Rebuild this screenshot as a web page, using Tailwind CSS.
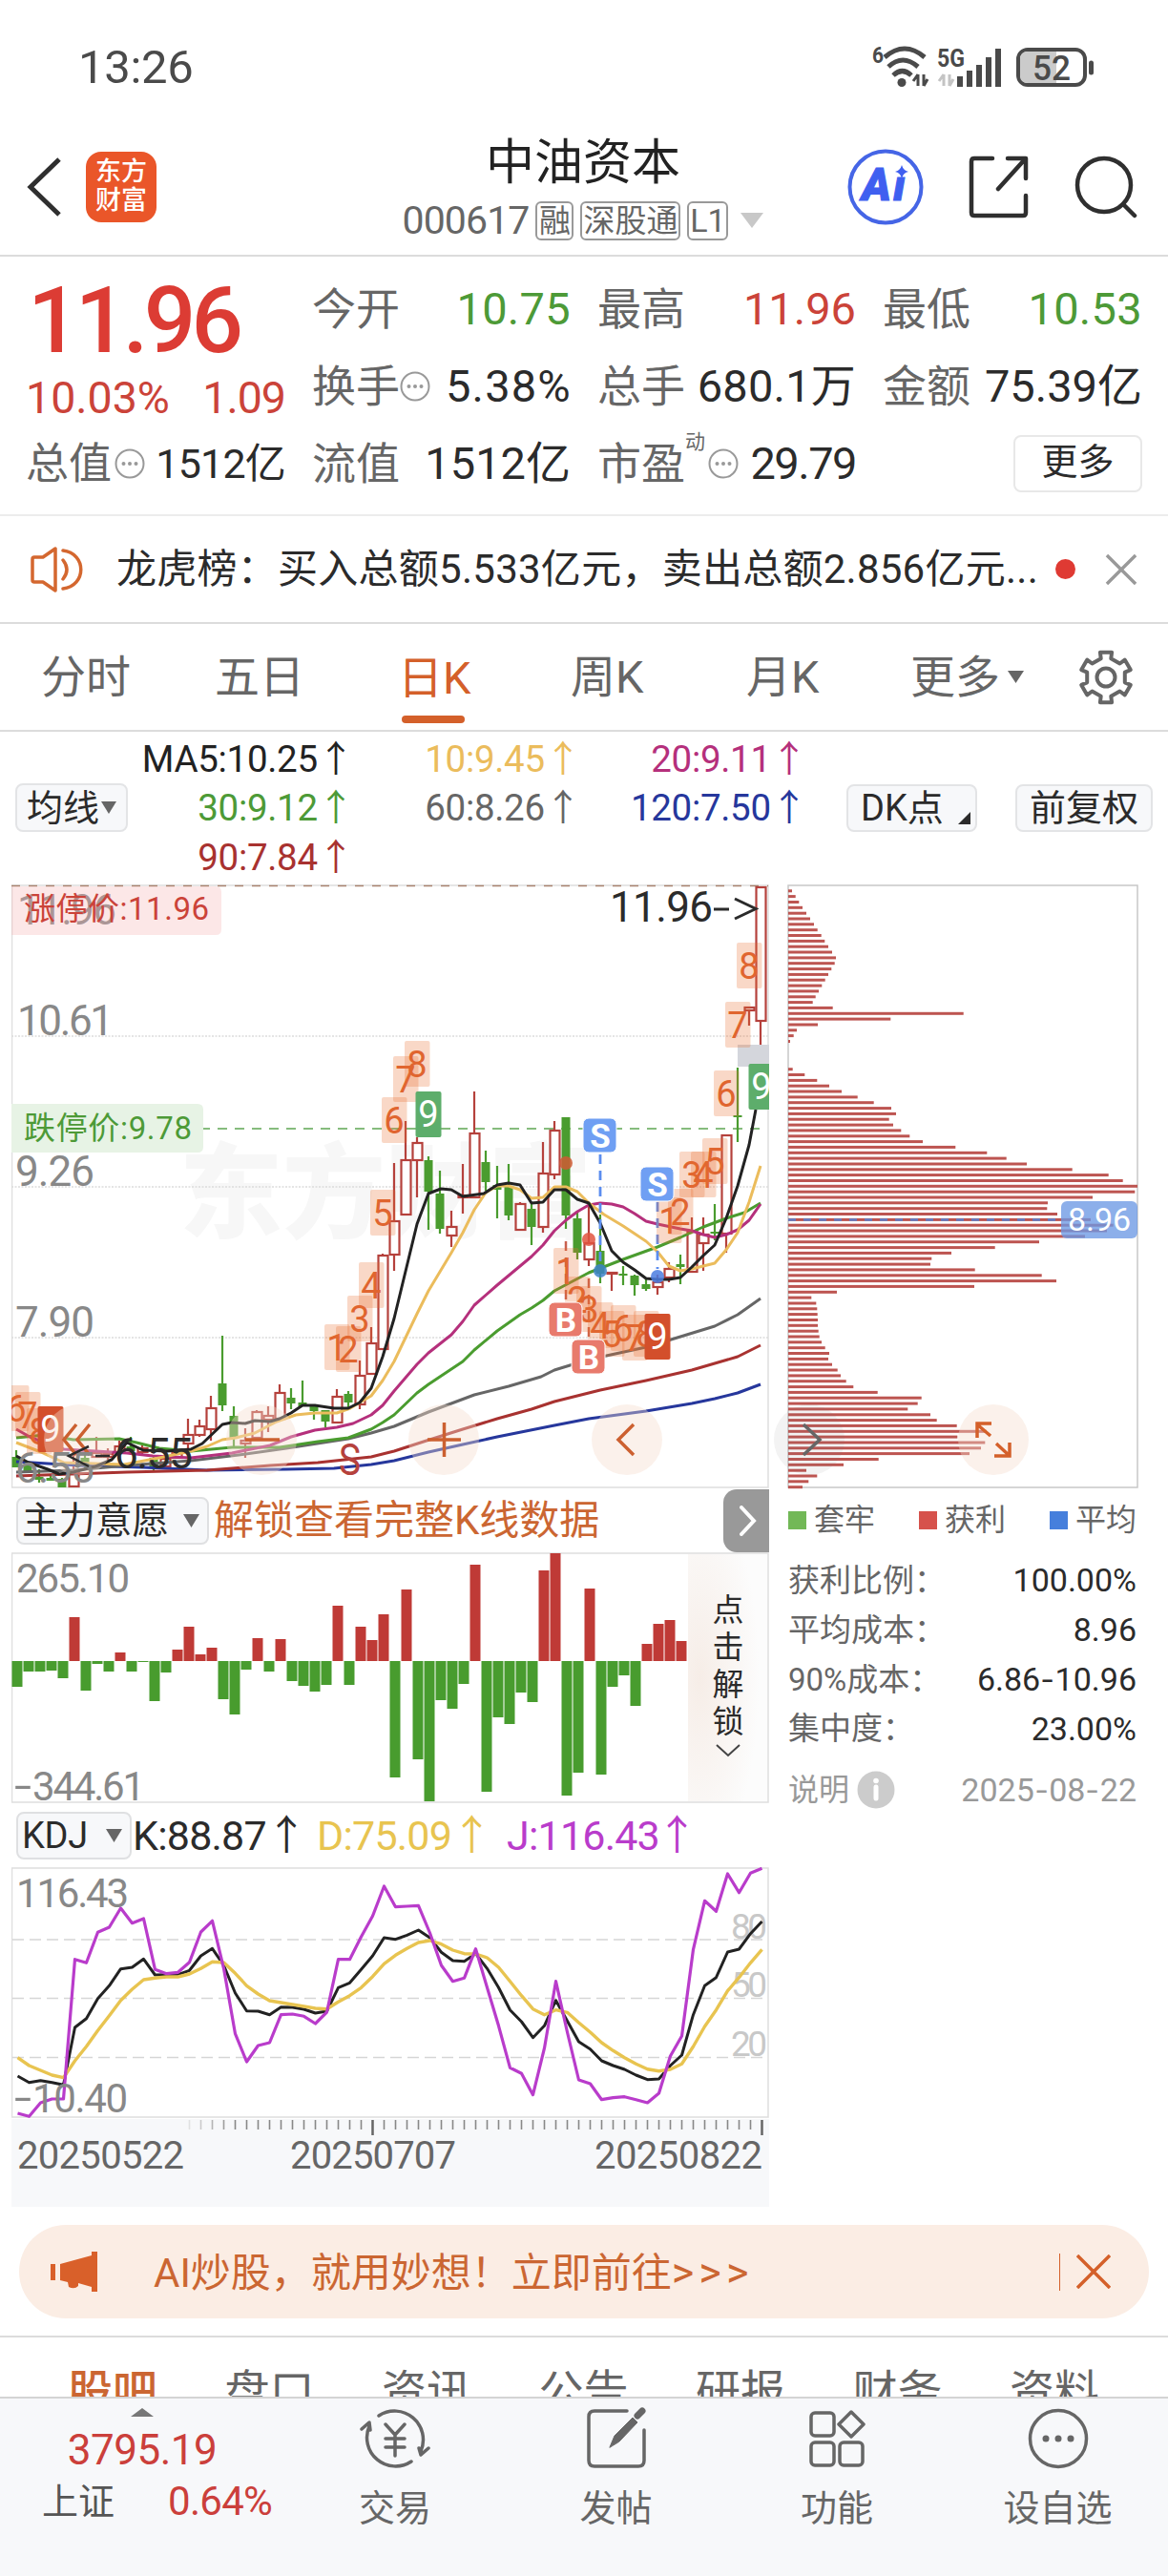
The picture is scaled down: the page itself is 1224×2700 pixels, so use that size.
<!DOCTYPE html>
<html lang="zh-CN">
<head>
    <meta charset="UTF-8">
    <meta name="viewport" content="width=device-width, initial-scale=1.0">
    <title>中油资本 000617</title>
    <script src="https://cdn.jsdelivr.net/npm/@tailwindcss/browser@4"></script>
</head>
<body class="bg-white">
<div class="w-[1224px] h-[2700px] overflow-hidden flex flex-col bg-white text-[#2b2b2b] font-['Roboto','Noto_Sans_CJK_SC',sans-serif] whitespace-nowrap">

    <!-- status bar -->
    <div class="h-[98px] shrink-0 flex items-center justify-between pl-[82px] pr-[77px] pt-[42px] text-[#4a4a4a]">
        <span class="text-[49px] leading-none tracking-[-0.3px]">13:26</span>
        <svg width="234" height="48" viewBox="913 46 234 48" font-family="Roboto">
            <text x="914" y="66" font-size="23" font-weight="700" fill="#4a4a4a" textLength="12" lengthAdjust="spacingAndGlyphs">6</text>
            <g fill="none" stroke="#4a4a4a" stroke-width="5">
                <path d="M927 60Q948 42 969 60"/>
                <path d="M931 70Q946 56 962 70"/>
                <path d="M936 79Q945.500 70 955 79"/>
            </g>
            <circle cx="945" cy="86.500" r="4.500" fill="#4a4a4a"/>
            <path d="M962 78v12M962 78l-5 7M968 90v-12M968 90l4-7" stroke="#4a4a4a" stroke-width="3" fill="none"/>
            <text x="982" y="70" font-size="25" font-weight="700" fill="#4a4a4a" textLength="29" lengthAdjust="spacingAndGlyphs">5G</text>
            <path d="M989 78v12M989 78l-5 7M995 90v-12M995 90l4-7" stroke="#c4c4c4" stroke-width="3" fill="none"/>
            <path d="M1006 91V80M1016 91V74M1026 91V68M1036 91V60M1046 91V51" stroke="#4a4a4a" stroke-width="6"/>
            <rect x="1067" y="52" width="70" height="37" rx="10" fill="#fff" stroke="#4a4a4a" stroke-width="4"/>
            <path d="M1077 54h30v33h-30q-8 0-8-8v-17q0-8 8-8z" fill="#cbcbcb"/>
            <path d="M1143.500 66v10" stroke="#4a4a4a" stroke-width="5" stroke-linecap="round"/>
            <text x="1082" y="84" font-size="37" font-weight="500" fill="#4a4a4a" textLength="40" lengthAdjust="spacingAndGlyphs">52</text>
        </svg>
    </div>

    <!-- title bar -->
    <div class="h-[171px] shrink-0 border-b-2 border-[#dcdcdc] flex pl-[28px] pr-[32px]">
        <div class="w-[380px] flex items-center gap-[26px] pt-[26px]">
            <svg width="36" height="62" viewBox="0 0 36 62" fill="none" stroke="#2f2f2f" stroke-width="5"><path d="M34 2L4 31l30 29"/></svg>
            <div class="size-[74px] rounded-[16px] bg-[#ea5629] text-white text-[27px] font-medium leading-[30px] flex flex-col items-center justify-center pb-0.5"><span>东方</span><span>财富</span></div>
        </div>
        <div class="w-[406px] flex flex-col items-center pt-[45px]">
            <div class="text-[51px] leading-[56px] text-[#222]">中油资本</div>
            <div class="flex items-center gap-[7px] mt-[11px] text-[#666]">
                <span class="text-[41px] leading-[42px] tracking-[-0.900px]">000617</span>
                <span class="h-[41px] w-[40px] flex items-center justify-center border-2 border-[#999] rounded-md text-[33px] leading-none">融</span>
                <span class="h-[41px] w-[105px] flex items-center justify-center border-2 border-[#999] rounded-md text-[33px] leading-none">深股通</span>
                <span class="h-[41px] w-[43px] flex items-center justify-center border-2 border-[#999] rounded-md text-[34px] leading-none">L1</span>
                <svg class="ml-[6px]" width="24" height="16" viewBox="0 0 24 16"><path d="M0 0h24L12 16z" fill="#c8c8c8"/></svg>
            </div>
        </div>
        <div class="flex-1 flex items-center justify-end gap-[46px] pt-[26px]">
            <svg width="80" height="80" viewBox="0 0 80 80" font-family="Roboto" font-weight="900" font-style="italic" fill="#3f5ff0">
                <circle cx="40" cy="40" r="37.500" fill="none" stroke="#4565e6" stroke-width="4"/>
                <text x="15" y="54" font-size="48" textLength="31" lengthAdjust="spacingAndGlyphs" stroke="#3f5ff0" stroke-width="1">A</text>
                <text x="48" y="54" font-size="46" stroke="#3f5ff0" stroke-width="1">ı</text>
                <path d="M57 17q1.500 5.500 7 7-5.500 1-7 7-1.500-6-7-7 5.500-1.500 7-7z"/>
            </svg>
            <svg width="66" height="66" viewBox="0 0 66 66" fill="none" stroke="#2f2f2f" stroke-width="4.500" stroke-linecap="round" stroke-linejoin="round"><path d="M26 3H7q-3 0-3 3v54q0 3 3 3h51q3 0 3-3V42M42 3h19v21M60 4L32 35"/></svg>
            <svg width="66" height="66" viewBox="0 0 66 66" fill="none" stroke="#2f2f2f" stroke-width="4.500" stroke-linecap="round"><circle cx="31" cy="31" r="28"/><path d="M51 51l12 12"/></svg>
        </div>
    </div>

    <!-- quote -->
    <div class="h-[272px] shrink-0 border-b-2 border-[#ececec] flex gap-[28px] pl-[28px] pr-[25px] pt-[14px] text-[47px] leading-none">
        <div class="w-[271px]">
            <div class="h-[105px] flex items-center text-[96px] font-medium text-[#dc3c34] tracking-[-4.700px] pl-px">11.96</div>
            <div class="h-[58px] flex items-center justify-between text-[#cb4339] text-[46.500px] -ml-px"><span>10.03%</span><span class="tracking-[-1px]">1.09</span></div>
            <div class="h-[80px] flex items-center -ml-px"><span class="text-[#666] text-[45px]">总值</span><svg class="ml-[3px]" width="32" height="32" viewBox="0 0 32 32"><use href="#dots"/></svg><span class="ml-auto text-[43px] tracking-[-0.8px]">1512亿</span></div>
        </div>
        <div class="w-[271px]">
            <div class="h-[81px] flex items-center"><span class="text-[#666] text-[46px]">今开</span><span class="ml-auto text-[#4d9a37] tracking-[0.3px]">10.75</span></div>
            <div class="h-[81px] flex items-center"><span class="text-[#666] text-[46px]">换手</span><svg width="32" height="32" viewBox="0 0 32 32"><use href="#dots"/></svg><span class="ml-auto -mr-px tracking-[1.200px]">5.38%</span></div>
            <div class="h-[81px] flex items-center"><span class="text-[#666] text-[46px]">流值</span><span class="ml-auto">1512亿</span></div>
        </div>
        <div class="w-[271px]">
            <div class="h-[81px] flex items-center"><span class="text-[#666] text-[46px]">最高</span><span class="ml-auto text-[#cb4339]">11.96</span></div>
            <div class="h-[81px] flex items-center"><span class="text-[#666] text-[46px]">总手</span><span class="ml-auto tracking-[0.2px]">680.1万</span></div>
            <div class="h-[81px] flex items-center"><span class="text-[#666] text-[46px]">市盈</span><span class="text-[21px] text-[#666] self-start mt-[8px]">动</span><svg class="ml-[3px]" width="32" height="32" viewBox="0 0 32 32"><use href="#dots"/></svg><span class="ml-auto tracking-[-1.500px]">29.79</span></div>
        </div>
        <div class="w-[272px]">
            <div class="h-[81px] flex items-center"><span class="text-[#666] text-[46px]">最低</span><span class="ml-auto text-[#4d9a37] tracking-[0.3px]">10.53</span></div>
            <div class="h-[81px] flex items-center"><span class="text-[#666] text-[46px]">金额</span><span class="ml-auto">75.39亿</span></div>
            <div class="h-[81px] flex items-center justify-end"><span class="w-[135px] h-[60px] border-2 border-[#e8e8e8] rounded-lg flex items-center justify-center text-[38px] pb-1">更多</span></div>
        </div>
    </div>

    <!-- notice -->
    <div class="h-[113px] shrink-0 border-b-2 border-[#dcdcdc] flex items-center pl-[32px] pr-[32px]">
        <svg width="56" height="48" viewBox="0 0 56 48" fill="none" stroke="#d4672f" stroke-width="3.500" stroke-linejoin="round" stroke-linecap="round"><path d="M2 13q0-2 2-2h9L26 2v44L13 37H4q-2 0-2-2zM34 14q8 10 0 20M34 4c25 3 25 37 0 40"/></svg>
        <span class="ml-[34px] w-[968px] text-[42px] leading-none tracking-[0.260px]">龙虎榜：买入总额5.533亿元，卖出总额2.856亿元...</span>
        <span class="ml-[16px] size-[21px] rounded-full bg-[#df3a33]"></span>
        <svg class="ml-auto" width="34" height="34" viewBox="0 0 35 35" stroke="#999" stroke-width="3.500"><path d="M2 2l31 31M33 2L2 33"/></svg>
    </div>

    <!-- period tabs -->
    <div class="h-[113px] shrink-0 border-b-2 border-[#dcdcdc] flex items-center pl-[43px] text-[47px] leading-none text-[#666]">
        <span class="w-[182px]">分时</span>
        <span class="w-[195px]">五日</span>
        <span class="w-[178px] h-full flex flex-col text-[#d4602a]"><span class="mt-[33px] -ml-[3px]">日K</span><span class="mt-[16px] ml-[1px] w-[66px] h-[8px] rounded-full bg-[#d4602a]"></span></span>
        <span class="w-[184px]">周K</span>
        <span class="w-[172px]">月K</span>
        <span class="w-[175px] flex items-center gap-[8px]">更多<svg width="17" height="13" viewBox="0 0 17 13"><path d="M0 0h17L8.500 13z" fill="#666"/></svg></span>
        <svg width="60" height="60" viewBox="-30 -30 60 60" fill="none" stroke="#666" stroke-width="4" stroke-linejoin="round"><circle r="9.500"/><path id="gear"/></svg>
    </div>

    <!-- moving averages -->
    <div class="h-[159px] shrink-0 flex items-center pl-[16px] pr-[16px]">
        <div class="w-[118px] h-[51px] rounded-lg border-2 border-[#e3e4e6] bg-[#f7f8fa] flex items-center justify-center gap-0.5 text-[38px] leading-none">均线<svg width="16" height="13" viewBox="0 0 16 13"><path d="M0 0h16L8 13z" fill="#666"/></svg></div>
        <div class="w-[712px] grid grid-cols-[237px_238px_237px] text-right text-[38.500px] leading-[51.500px] h-[154px] tracking-[-0.3px]">
            <span class="text-[#222]">MA5:10.25↑</span><span class="text-[#ebbc5c]">10:9.45↑</span><span class="text-[#b5307c]">20:9.11↑</span>
            <span class="text-[#4d9a37]">30:9.12↑</span><span class="text-[#666]">60:8.26↑</span><span class="text-[#26379c]">120:7.50↑</span>
            <span class="text-[#a83230]">90:7.84↑</span>
        </div>
        <div class="ml-auto w-[137px] h-[50px] rounded-lg border-2 border-[#e3e4e6] bg-[#f7f8fa] flex items-center text-[38px] leading-none pl-[13px]">DK点<svg class="self-end mb-[6px] ml-auto mr-[5px]" width="13" height="13" viewBox="0 0 13 13"><path d="M13 0v13H0z" fill="#2b2b2b"/></svg></div>
        <div class="ml-[40px] w-[144px] h-[50px] rounded-lg border-2 border-[#e3e4e6] bg-[#f7f8fa] flex items-center justify-center text-[38px] leading-none">前复权</div>
    </div>

    <!-- charts -->
    <div class="flex shrink-0 pl-[12px] h-[1387px]">
        <div class="w-[796px] flex flex-col">
            <svg id="kline" class="shrink-0" width="796" height="635" viewBox="12 926 796 635"></svg>
            <div class="h-[66px] flex items-center pl-[5px]">
                <div class="w-[202px] h-[50px] rounded-lg border-2 border-[#dfe0e2] bg-[#f7f8fa] flex items-center justify-between pl-[4px] pr-[8px] text-[38.500px] leading-none">主力意愿<svg width="17" height="14" viewBox="0 0 17 14"><path d="M0 0h17L8.500 14z" fill="#666"/></svg></div>
                <span class="ml-[5px] text-[42px] leading-none text-[#cb6632]">解锁查看完整K线数据</span>
                <span class="ml-auto mr-[2px] w-[48px] h-[66px] rounded-l-[14px] bg-[#999] flex items-center justify-center pl-1"><svg width="18" height="32" viewBox="0 0 18 32" fill="none" stroke="#fff" stroke-width="4" stroke-linecap="round"><path d="M2 2l13 14L2 30"/></svg></span>
            </div>
            <svg id="force" class="shrink-0" width="796" height="264" viewBox="12 1627 796 264"></svg>
            <div class="h-[66px] flex items-center pl-[5px] text-[43px] leading-none tracking-[-0.8px]">
                <div class="w-[121px] h-[50px] rounded-lg border-2 border-[#dfe0e2] bg-[#f7f8fa] flex items-center justify-between pl-[4px] pr-[8px] text-[38px] tracking-[-0.3px]">KDJ<svg width="17" height="14" viewBox="0 0 17 14"><path d="M0 0h17L8.500 14z" fill="#666"/></svg></div>
                <span class="ml-[1px] w-[193px]">K:88.87<i class="not-italic">↑</i></span>
                <span class="w-[199px] text-[#e8c450]">D:75.09<i class="not-italic">↑</i></span>
                <span class="text-[#b93ccb]">J:116.43<i class="not-italic -ml-[3px]">↑</i></span>
            </div>
            <svg id="kdj" class="shrink-0" width="796" height="356" viewBox="12 1957 796 356"></svg>
        </div>

        <!-- cost distribution -->
        <div class="w-[370px] ml-[16px] flex flex-col text-[33px] leading-none">
            <svg id="chips" class="shrink-0 -ml-[18px]" width="388" height="635" viewBox="806 926 388 635"></svg>
            <div class="h-[64px] w-[367px] flex items-center justify-between text-[32px] text-[#666] pl-[2px]">
                <span class="flex items-center gap-[8px]"><i class="size-[19px] bg-[#72b857]"></i>套牢</span>
                <span class="flex items-center gap-[8px]"><i class="size-[19px] bg-[#d6524c]"></i>获利</span>
                <span class="flex items-center gap-[8px]"><i class="size-[19px] bg-[#467fdc]"></i>平均</span>
            </div>
            <div class="w-[367px] pl-[2px] pt-[5px] text-[#666]">
                <div class="h-[52px] flex items-center justify-between"><span>获利比例：</span><span class="text-[34px] text-[#2b2b2b]">100.00%</span></div>
                <div class="h-[52px] flex items-center justify-between"><span>平均成本：</span><span class="text-[34px] text-[#2b2b2b]">8.96</span></div>
                <div class="h-[52px] flex items-center justify-between"><span>90%成本：</span><span class="text-[34px] text-[#2b2b2b]">6.86<i class="not-italic inline-block scale-x-125 mx-[3px]">-</i>10.96</span></div>
                <div class="h-[51px] flex items-center justify-between"><span>集中度：</span><span class="text-[34px] text-[#2b2b2b]">23.00%</span></div>
                <div class="h-[78px] flex items-center text-[#999]"><span class="text-[32px]">说明</span><svg class="ml-[8px]" width="40" height="40" viewBox="0 0 40 40"><circle cx="20" cy="20" r="19.500" fill="#ccc"/><path d="M20 17v12" stroke="#fff" stroke-width="5" stroke-linecap="round"/><circle cx="20" cy="10.500" r="2.800" fill="#fff"/></svg><span class="ml-auto text-[34px]">2025<i class="not-italic inline-block scale-x-125 mx-[3px]">-</i>08<i class="not-italic inline-block scale-x-125 mx-[3px]">-</i>22</span></div>
            </div>
        </div>
    </div>

    <!-- promo -->
    <div class="h-[98px] shrink-0 mx-[20px] mt-[19px] rounded-full bg-[#fbede4] flex items-center pl-[33px] pr-[40px] text-[#cb6632]">
        <svg width="50" height="42" viewBox="0 0 50 42" fill="#d9602a"><path d="M0 13h5v17H0zM10 13L43 4V0h6v42h-6v-5l-14-4v3q-4 4-10 1l-1-5-8-2z"/></svg>
        <span class="ml-[58px] text-[42px] leading-none">AI炒股，就用妙想！立即前往<span class="text-[45px] tracking-[5px]">&gt;&gt;&gt;</span></span>
        <span class="ml-auto w-px h-[39px] bg-[#d4602a]"></span>
        <svg class="ml-[17px]" width="36" height="36" viewBox="0 0 36 36" stroke="#d4602a" stroke-width="3.500"><path d="M1 1l34 34M35 1L1 35"/></svg>
    </div>

    <!-- info tabs -->
    <div class="mt-[18px] h-[64px] shrink-0 border-t-2 border-[#dcdcdc] overflow-hidden flex pl-[71px] pt-[32px] text-[47px] leading-[50px] text-[#666]">
        <span class="w-[164.500px] shrink-0 font-medium text-[#cb6632]">股吧</span><span class="w-[164.500px] shrink-0">盘口</span><span class="w-[164.500px] shrink-0">资讯</span><span class="w-[164.500px] shrink-0">公告</span><span class="w-[164.500px] shrink-0">研报</span><span class="w-[164.500px] shrink-0">财务</span><span class="w-[150px] shrink-0">资料</span>
    </div>

    <!-- bottom bar -->
    <div class="flex-1 bg-[#f7f8fa] border-t-2 border-[#d4d4d4] flex text-[38px] leading-none text-[#666]">
        <div class="w-[298px] flex flex-col items-center text-[#cb3f3b]">
            <svg class="mt-[10px]" width="24" height="9" viewBox="0 0 24 9"><path d="M12 0l12 9H0z" fill="#777"/></svg>
            <div class="mt-[13px] text-[44px] tracking-[-0.5px]">3795.19</div>
            <div class="mt-[11px] w-[242px] ml-[32px] flex items-center"><span class="text-[#555]">上证</span><span class="ml-[56px] text-[42px] tracking-[-0.7px]">0.64%</span></div>
        </div>
        <div class="w-[232px] flex flex-col items-center pt-[9px] gap-[21px]">
            <svg width="76" height="66" viewBox="-38 -33 76 66" fill="none" stroke="#666" stroke-width="3.500" stroke-linecap="round" stroke-linejoin="round"><path d="M-17-24A30 30 0 0 1 27 13M17 24A30 30 0 0 1-27-13M35 10l-8 7-2-7M-35-10l8-7 1 8M-10-15L0-4l10-11M0-4v22M-10 0H10M-10 9H10"/></svg>
            <span>交易</span>
        </div>
        <div class="w-[231px] flex flex-col items-center pt-[9px] gap-[21px]">
            <svg width="66" height="66" viewBox="0 0 66 66" fill="none" stroke="#666" stroke-width="3.500" stroke-linecap="round"><path d="M44 4H10q-6 0-6 6v46q0 6 6 6h46q6 0 6-6V24"/><path d="M26 42l5-12L50 11l5 5-19 20z" fill="#666" stroke-width="1"/><path d="M55 9l5-5" stroke-width="7"/></svg>
            <span>发帖</span>
        </div>
        <div class="w-[232px] flex flex-col items-center pt-[9px] gap-[21px]">
            <svg width="66" height="66" viewBox="0 0 66 66" fill="none" stroke="#666" stroke-width="3.500" stroke-linejoin="round"><rect x="6" y="6" width="24" height="24" rx="4"/><rect x="6" y="37" width="24" height="24" rx="4"/><rect x="36" y="37" width="24" height="24" rx="4"/><path d="M48 5l13 13-13 13-13-13z"/></svg>
            <span>功能</span>
        </div>
        <div class="flex-1 flex flex-col items-center pt-[9px] gap-[21px]">
            <svg width="66" height="66" viewBox="0 0 66 66"><circle cx="33" cy="33" r="29.500" fill="none" stroke="#666" stroke-width="3.500"/><g fill="#666"><circle cx="20" cy="33" r="3.500"/><circle cx="33" cy="33" r="3.500"/><circle cx="46" cy="33" r="3.500"/></g></svg>
            <span>设自选</span>
        </div>
    </div>
</div>

<svg width="0" height="0" class="absolute">
    <g id="dots"><circle cx="16" cy="16" r="14.500" fill="none" stroke="#999" stroke-width="2"/><g fill="#999"><circle cx="9.500" cy="16" r="2"/><circle cx="16" cy="16" r="2"/><circle cx="22.500" cy="16" r="2"/></g></g>
</svg>

<script>
    const RED = "#b5413c", GREEN = "#4a9c2f";
    const GREY = "#888";

    function text(x, y, size, fill, str, len, extra = "") {
        const fit = len ? ` textLength="${len}" lengthAdjust="spacing"` : "";
        return `<text x="${x}" y="${y}" font-size="${size}" fill="${fill}"${fit} ${extra}>${str}</text>`;
    }
    function line(points, color, w = 2.5) {
        return `<polyline points="${points}" fill="none" stroke="${color}" stroke-width="${w}" stroke-linejoin="round"/>`;
    }

    // gear outline, six teeth
    let gear = "";
    for (let k = 0; k < 6; k++) {
        [[-15, 20.5], [-13, 27], [13, 27], [15, 20.5]].forEach(([a, r]) => {
            const t = (k * 60 + a - 90) * Math.PI / 180;
            gear += (gear ? "L" : "M") + (Math.cos(t) * r).toFixed(1) + " " + (Math.sin(t) * r).toFixed(1);
        });
    }
    document.getElementById("gear").setAttribute("d", gear + "z");

    // candles: up flag, high, body top, body bottom, low
    const candles = [
        [0,1520,1527,1538,1538],[0,1535,1536,1543,1543],[0,1540,1548,1551,1554],[0,1545,1549,1552,1552],[0,1549,1550,1559,1559],[1,1523,1541,1558,1558],
        [0,1520,1528,1536,1540],[1,1506,1522,1527,1527],[1,1518,1523,1527,1532],[1,1510,1515,1522,1527],[0,1506,1516,1521,1525],[1,1515,1517,1522,1525],
        [0,1525,1528,1538,1541],[1,1526,1528,1537,1537],[1,1520,1522,1528,1528],[1,1487,1503,1513,1521],[1,1488,1494,1504,1506],[1,1463,1475,1498,1510],
        [0,1400,1450,1473,1479],[0,1474,1484,1507,1516],[1,1497,1509,1513,1528],[1,1478,1479,1507,1507],[1,1474,1483,1488,1501],[1,1451,1459,1487,1487],
        [0,1455,1465,1471,1477],[0,1447,1470,1474,1474],[0,1472,1474,1479,1488],[0,1478,1478,1490,1496],[1,1456,1463,1491,1491],[0,1458,1461,1470,1475],
        [1,1426,1441,1472,1477],[1,1391,1407,1440,1440],[1,1314,1315,1414,1414],[1,1219,1279,1315,1332],[1,1175,1215,1273,1273],[1,1192,1197,1216,1255],
        [0,1212,1216,1249,1289],[0,1227,1251,1288,1293],[1,1269,1285,1295,1307],[1,1220,1252,1255,1272],[1,1144,1187,1255,1255],[0,1206,1218,1239,1248],
        [0,1222,1242,1247,1277],[0,1220,1243,1274,1279],[1,1260,1261,1289,1290],[0,1261,1267,1286,1305],[1,1197,1229,1286,1292],[1,1175,1184,1231,1236],
        [0,1171,1171,1274,1288],[0,1270,1277,1313,1320],[1,1263,1302,1320,1327],[0,1273,1311,1335,1345],[1,1333,1333,1335,1353],[0,1327,1335,1337,1347],
        [0,1336,1337,1347,1358],[0,1340,1346,1351,1353],[1,1336,1343,1349,1357],[1,1323,1329,1339,1344],[0,1315,1325,1328,1346],[1,1276,1290,1333,1333],
        [1,1276,1293,1303,1332],[0,1262,1291,1293,1300],[1,1189,1189,1293,1313],[0,1119,1169,1171,1197],[1,1055,1055,1059,1075],[1,929,929,1070,1095]
    ];
    const averages = [
        ["#26379c", "17,1532 83,1536 150,1538 217,1541 300,1540 350,1539 389,1535 413,1531 449,1522 485,1514 521,1506 581,1494 617,1487 677,1479 725,1471 749,1466 773,1460 797,1451"],
        ["#a83230", "17,1547 133,1543 217,1541 283,1536 333,1533 389,1527 413,1521 447,1510 485,1498 521,1487 557,1477 581,1469 629,1457 677,1447 725,1436 773,1422 797,1410"],
        ["#666", "17,1543 77,1541 133,1536 200,1531 250,1525 300,1518 365,1508 389,1502 413,1495 449,1480 497,1462 533,1453 567,1443 581,1436 617,1425 677,1412 700,1405 749,1390 773,1378 797,1361"],
        ["#4a9c2f", "17,1507 47,1504 77,1509 125,1508 143,1512 167,1518 200,1521 243,1517 293,1517 333,1511 365,1507 389,1498 401,1491 413,1483 437,1460 449,1451 485,1427 497,1415 521,1395 545,1378 557,1371 569,1363 581,1353 617,1334 653,1320 689,1307 713,1297 737,1286 761,1277 780,1271 797,1261"],
        ["#b5307c", "17,1498 33,1507 67,1519 100,1521 133,1523 160,1526 200,1528 243,1523 283,1515 305,1506 330,1499 353,1496 370,1492 389,1483 401,1473 413,1458 437,1430 449,1418 473,1399 485,1385 497,1368 521,1347 533,1337 557,1317 569,1305 581,1290 593,1279 605,1270 617,1263 629,1261 641,1262 653,1265 665,1272 677,1280 689,1283 713,1288 725,1290 737,1294 749,1297 761,1294 773,1289 785,1279 797,1262"],
        ["#ebbc5c", "17,1512 43,1522 67,1533 130,1535 167,1528 200,1521 217,1516 233,1509 247,1507 267,1502 290,1490 310,1483 330,1481 353,1481 367,1476 377,1470 389,1463 401,1447 413,1427 437,1377 449,1353 473,1313 485,1292 497,1268 509,1250 521,1243 533,1243 545,1247 557,1256 569,1255 581,1244 593,1244 605,1249 617,1261 633,1273 653,1285 677,1301 689,1312 701,1327 713,1332 725,1330 749,1324 761,1310 773,1292 785,1260 797,1222"],
        ["#222", "17,1526 30,1533 50,1540 62,1545 77,1543 100,1537 117,1530 133,1512 150,1520 175,1521 200,1519 212,1513 233,1493 243,1491 257,1492 267,1489 283,1490 293,1487 305,1481 317,1473 330,1473 350,1476 365,1476 377,1470 389,1455 401,1422 413,1382 437,1283 449,1251 462,1246 473,1247 485,1254 507,1251 521,1242 533,1240 545,1242 557,1261 569,1260 581,1247 593,1247 605,1257 617,1261 629,1282 641,1311 653,1323 665,1331 677,1340 689,1341 701,1341 713,1339 725,1328 737,1316 749,1305 761,1277 773,1243 785,1200 792,1163"]
    ];
    // sequence marks: x, y, digit
    const marks = [
        [17,1476,6],[29,1483,7],[41,1500,8],[353,1412,1],[365,1414,2],[377,1382,3],[389,1347,4],[401,1271,5],[413,1174,6],[425,1131,7],[437,1115,8],
        [593,1332,1],[605,1362,2],[617,1372,3],[629,1389,4],[641,1398,5],[653,1392,6],[665,1402,7],[677,1398,8],
        [701,1279,1],[713,1270,2],[725,1231,3],[737,1231,4],[749,1217,5],[761,1146,6],[773,1074,7],[785,1012,8]
    ];

    function roundButton(cx, fill, path, color) {
        return `<circle cx="${cx}" cy="1509" r="37" fill="${fill}"/><path d="${path}" fill="none" stroke="${color}" stroke-width="3.500"/>`;
    }

    function drawKline() {
        let s = `<defs><clipPath id="kc"><rect x="12" y="926" width="794" height="635"/></clipPath></defs>`;
        s += `<rect x="12.5" y="928" width="792.5" height="631" fill="none" stroke="#dedede" stroke-width="1.5"/>`;
        s += text(188, 1289, 108, "#f7f7f7", "东方财富", 0, `font-weight="900"`);
        [1086, 1244, 1402].forEach(y => s += `<path d="M12 ${y}H805" stroke="#dcdcdc" stroke-width="1.500" stroke-dasharray="2 1.500"/>`);
        s += `<path d="M12 928.500H805" stroke="#a8836f" stroke-width="1.500" stroke-dasharray="9 9"/>`;
        s += `<path d="M12 1183H800" stroke="#5fa653" stroke-width="1.500" stroke-dasharray="10 8"/>`;
        s += `<g clip-path="url(#kc)">`;
        candles.forEach(([up, hi, top, bot, low], i) => {
            const x = 17 + 12 * i, c = up ? RED : GREEN;
            s += `<path d="M${x} ${hi}V${top}M${x} ${bot}V${low}" stroke="${c}" stroke-width="2.200"/>`;
            if (up) s += `<rect x="${x - 4.5}" y="${top + 1}" width="10" height="${Math.max(bot - top - 1, 1)}" fill="#fff" stroke="${c}" stroke-width="2.200"/>`;
            else s += `<rect x="${x - 4.5}" y="${top}" width="9" height="${Math.max(bot - top, 1)}" fill="${c}"/>`;
        });
        averages.forEach(([c, p]) => s += line(p, c, 3));
        s += `<rect x="773" y="1095" width="33" height="23" fill="#d4d6dc"/>`;
        s += `<path d="M629 1210V1326M689 1260V1330" stroke="#5b8def" stroke-width="2.800" stroke-dasharray="10 7"/>`;
        s += `<path d="M593 1301V1363M617 1340V1403" stroke="#c9614f" stroke-width="2.500" stroke-dasharray="10 7"/>`;
        marks.forEach(([x, y, n]) => {
            s += `<rect x="${x - 13}" y="${y - 24}" width="26.500" height="48" rx="2" fill="#e8702f" fill-opacity=".27"/>`;
            s += text(x, y + 14, 38, "#e0652f", n, 0, `text-anchor="middle"`);
        });
        [[53, 1498, "#d34f2b"], [449, 1168, "#5dad6b"], [689, 1401, "#d34f2b"], [798, 1139, "#5dad6b"]].forEach(([x, y, c]) => {
            s += `<rect x="${x - 13.5}" y="${y - 24}" width="27" height="48" rx="2" fill="${c}"/>`;
            s += text(x, y + 13, 38, "#fff", 9, 0, `text-anchor="middle"`);
        });
        s += `</g>`;
        [[593, 1219, "#cf5a34"], [617, 1299, "#e2553f"], [629, 1332, "#3b83c9"], [689, 1338, "#4a7de0"]].forEach(([x, y, c]) =>
            s += `<circle cx="${x}" cy="${y}" r="7" fill="${c}" fill-opacity=".85"/>`);
        [[629, 1190, "S", "#6f9ff3"], [689, 1241, "S", "#6f9ff3"], [593, 1383, "B", "#e87a6c"], [617, 1422, "B", "#e87a6c"]].forEach(([x, y, t, c]) => {
            s += `<rect x="${x - 18}" y="${y - 18}" width="35" height="36" rx="6" fill="${c}" stroke="#fff" stroke-width="1"/>`;
            s += text(x, y + 12.5, 35, "#fff", t, 0, `text-anchor="middle" font-weight="700"`);
        });
        s += roundButton(83, "rgb(245 220 204 / .4)", "M80 1493L67 1509L80 1525M94 1493L81 1509L94 1525", "#cc6030");
        s += roundButton(274, "rgb(245 220 204 / .4)", "M257 1509H293", "#cc6030");
        s += roundButton(465, "rgb(245 220 204 / .4)", "M448 1509H483M465.500 1491V1527", "#cc6030");
        s += roundButton(657, "rgb(245 220 204 / .4)", "M664 1493L648 1509L664 1525", "#cc6030");
        s += text(355, 1546, 46, "#b5413c", "S", 0, `textLength="23" lengthAdjust="spacingAndGlyphs"`);
        // price limits
        s += text(18, 969, 44, GREY, "11.96", 104) + text(18, 1085, 44, GREY, "10.61", 101) + text(16, 1243, 44, GREY, "9.26", 83);
        s += text(16, 1401, 44, GREY, "7.90", 83) + text(16, 1554, 44, GREY, "6.55", 83);
        s += `<path d="M12 929H226q6 0 6 6V974q0 6-6 6H12z" fill="#f5b5b5" fill-opacity=".32"/>`;
        s += text(25, 964, 33, "#cb4339", "涨停价:11.96", 194);
        s += `<path d="M12 1157H207q6 0 6 6V1202q0 6-6 6H12z" fill="#e7f3e5"/>`;
        s += text(25, 1194, 33, "#4d9a37", "跌停价:9.78", 176);
        s += text(639, 966, 44, "#2b2b2b", "11.96", 108) + `<path d="M748 953H764M770 942L792 952.500L770 963" fill="none" stroke="#2b2b2b" stroke-width="3"/>`;
        s += text(120, 1539, 44, "#2b2b2b", "6.55", 82) + `<path d="M100 1526H115M93 1516L72 1526L93 1537" fill="none" stroke="#2b2b2b" stroke-width="2.500"/>`;
        document.getElementById("kline").innerHTML = s;
    }

    // signed bar heights in px, 12px pitch
    const force = [-27,-11,-11,-10,-18,46,-31,-3,-11,9,-11,-1,-42,-12,12,36,7,14,-40,-56,-9,24,-11,23,-21,-26,-32,-25,58,-25,36,22,49,-122,75,-103,-147,-41,-50,-24,101,-137,-59,-66,-33,-43,95,113,-141,-117,76,-119,-27,-15,-47,18,39,43,21];

    function drawForce() {
        let s = `<defs><radialGradient id="glow" cx=".15" cy=".5" r=".75"><stop offset="0" stop-color="#f6ede7"/><stop offset="1" stop-color="#fcfcfc"/></radialGradient></defs>`;
        s += `<rect x="12.500" y="1628" width="792.500" height="261" fill="none" stroke="#dedede" stroke-width="1.500"/>`;
        s += text(17, 1669, 42, GREY, "265.10", 119) + text(34, 1887, 42, GREY, "344.61", 118);
        s += text(15, 1886, 42, GREY, "-", 0, `textLength="18" lengthAdjust="spacingAndGlyphs"`);
        force.forEach((v, i) => {
            s += `<rect x="${12.5 + 12 * i}" y="${v > 0 ? 1741 - v : 1741}" width="11" height="${Math.abs(v)}" fill="${v > 0 ? "#bf3a36" : "#489c2e"}"/>`;
        });
        s += `<rect x="721" y="1629" width="83" height="259" fill="url(#glow)"/>`;
        ["点", "击", "解", "锁"].forEach((t, i) => s += text(763, 1699 + 39 * i, 33, "#2b2b2b", t, 0, `text-anchor="middle"`));
        s += `<path d="M751 1829L763 1840L775 1829" fill="none" stroke="#444" stroke-width="2"/>`;
        document.getElementById("force").innerHTML = s;
    }

    // kdj samples, thirds of a pixel below y=1940
    const K = [708,728,722,728,736,555,527,464,424,371,366,340,390,389,389,376,330,307,360,447,503,504,515,491,492,498,510,504,430,415,373,330,273,278,265,249,273,319,345,347,323,370,430,500,537,587,550,470,535,600,623,660,675,687,705,719,717,675,642,515,424,398,318,309,260,222];
    const D = [650,675,690,705,713,660,615,565,518,470,435,405,400,396,396,387,370,349,351,385,424,450,471,477,483,489,495,497,475,455,430,395,355,328,307,288,282,293,312,323,324,336,366,410,455,497,515,500,508,540,570,603,628,650,670,686,692,687,670,615,552,500,440,398,352,310];
    const J = [825,835,792,780,780,341,352,256,240,180,227,213,373,386,382,350,255,220,370,575,663,612,603,515,513,520,543,507,341,341,270,205,111,176,174,172,258,360,410,400,308,430,550,682,700,767,620,410,570,720,732,782,776,773,782,792,762,645,582,310,157,190,72,131,70,55];

    function drawKdj() {
        const pts = a => a.map((v, i) => `${18.5 + 12 * i},${(1940 + v / 3).toFixed(1)}`).join(" ");
        let s = `<rect x="12.500" y="1958" width="792.500" height="261" fill="none" stroke="#dedede" stroke-width="1.500"/>`;
        [2033, 2094.5, 2156.5].forEach(y => s += `<path d="M13 ${y}H805" stroke="#d6d6d6" stroke-width="1.500" stroke-dasharray="12 6"/>`);
        s += text(766, 2032, 37, "#c8c8c8", "80", 38) + text(766, 2093, 37, "#c8c8c8", "50", 38) + text(766, 2155, 37, "#c8c8c8", "20", 38);
        s += line(pts(K), "#222", 3) + line(pts(D), "#e8c450", 3.4) + line(pts(J), "#b93ccb", 3.2);
        s += text(17, 1999, 42, GREY, "116.43", 118) + text(34, 2214, 42, GREY, "10.40", 100);
        s += text(15, 2213, 42, GREY, "-", 0, `textLength="18" lengthAdjust="spacingAndGlyphs"`);
        s += `<rect x="12" y="2221" width="794" height="92" fill="#f7f8fa"/>`;
        for (let i = 15; i < 66; i++) {
            const major = i === 31 || i === 65;
            s += `<path d="M${18.5 + 12 * i} 2222V${major ? 2238 : 2232}" stroke="${major ? "#666" : "#888"}" stroke-width="${major ? 2.5 : 1.6}" opacity="${Math.min(1, (i - 14) / 5)}"/>`;
        }
        s += text(18, 2273, 40, "#666", "20250522", 175) + text(304, 2273, 40, "#666", "20250707", 174) + text(623, 2273, 40, "#666", "20250822", 176);
        document.getElementById("kdj").innerHTML = s;
    }

    // chip distribution, bar lengths in thirds of a pixel
    const chips = [12,23,34,45,57,69,81,92,104,115,126,138,150,146,136,126,116,106,96,86,77,140,551,322,93,27,17,6,0,0,0,0,14,52,91,129,168,218,269,324,339,317,330,355,382,423,526,625,686,750,893,1007,1052,1098,1090,957,816,814,846,951,1022,1002,933,789,650,513,451,447,587,797,843,585,153,73,88,91,92,93,93,95,98,105,116,129,126,138,155,165,182,205,281,419,407,376,447,467,530,624,532,619,606,570,284,174,57,91,64,45];

    function drawChips() {
        let s = `<rect x="826" y="928" width="366" height="631" fill="none" stroke="#c8c8c8" stroke-width="1.500"/>`;
        chips.forEach((v, i) => {
            if (v) s += `<rect x="826" y="${(932.3 + i * 5.84).toFixed(1)}" width="${(v / 3).toFixed(1)}" height="3" fill="#bd5551"/>`;
        });
        s += `<path d="M826 1278.500H1112" stroke="#5f7fc9" stroke-width="2.500" stroke-dasharray="8 8"/>`;
        s += `<rect x="1112" y="1259" width="80" height="39" rx="6" fill="#6b98e4" fill-opacity=".78"/>`;
        s += text(1119, 1290, 34, "#fff", "8.96", 66);
        s += roundButton(848, "rgb(120 120 120 / .09)", "M842 1493L859 1509L842 1525", "#666");
        s += roundButton(1041, "rgb(245 220 204 / .4)", "M1038 1505L1024 1493M1024 1507V1492H1039M1044 1513L1057 1525M1042 1526H1058V1512", "#d4602a");
        document.getElementById("chips").innerHTML = s;
    }

    drawKline();
    drawForce();
    drawKdj();
    drawChips();
</script>
</body>
</html>
